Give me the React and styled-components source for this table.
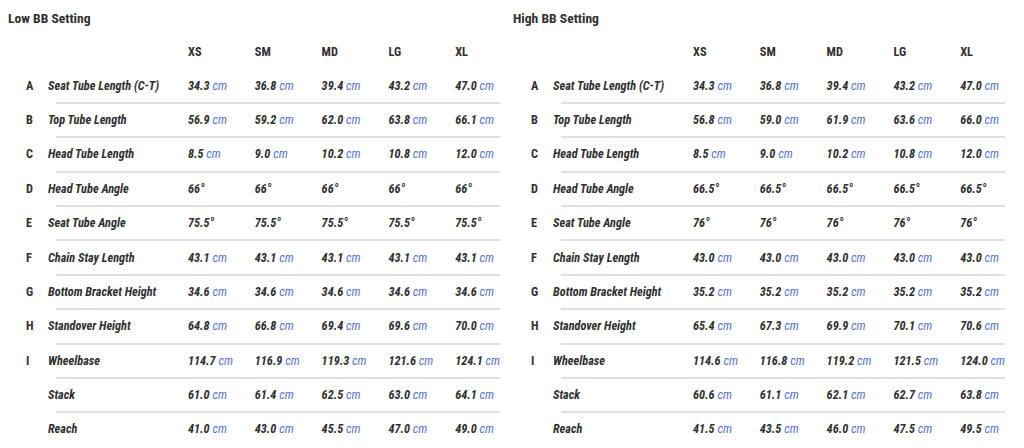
import React from 'react';
import styled, { createGlobalStyle } from 'styled-components';

const GlobalStyle = createGlobalStyle`
    body {
        margin: 0;
        background: #fff;
        font-family: "Roboto Condensed", "Liberation Sans Narrow", "DejaVu Sans Condensed", Roboto, sans-serif;
        color: #303030;
    }
`;

const Page = styled.div`
    display: flex;
    padding: 8px 0 0 8px;
    width: 1024px;
    height: 448px;
    box-sizing: border-box;
    overflow: hidden;
`;

const Panel = styled.div`
    width: 505px;
    display: flex;
    flex-direction: column;
`;

const Title = styled.div`
    font-size: 13.6px;
    font-weight: 700;
    line-height: 20px;
    margin-bottom: 7px;
`;

const Row = styled.div`
    display: grid;
    grid-template-columns: 22px 140px repeat(4, 66.8px) 1fr;
    align-items: center;
    height: ${props => props.header ? '34.4px' : '32.4px'};
    padding-left: 18px;
    font-size: 12.3px;
`;

const Size = styled.div`
    font-weight: 700;
`;

const Letter = styled.div`
    font-weight: 700;
`;

const Label = styled.div`
    font-weight: 700;
    font-style: italic;
    white-space: nowrap;
`;

const Value = styled.div`
    font-style: italic;
    white-space: nowrap;
`;

const Num = styled.span`
    font-weight: 700;
`;

const Unit = styled.span`
    color: #5273d8;
    font-weight: 400;
`;

const Divider = styled.div`
    height: 2px;
    margin: 0 13px 0 48px;
    background: #e0e0e0;
`;

const sizes = ['XS', 'SM', 'MD', 'LG', 'XL'];

const low = [
    ['A', 'Seat Tube Length (C-T)', ['34.3', '36.8', '39.4', '43.2', '47.0']],
    ['B', 'Top Tube Length', ['56.9', '59.2', '62.0', '63.8', '66.1']],
    ['C', 'Head Tube Length', ['8.5', '9.0', '10.2', '10.8', '12.0']],
    ['D', 'Head Tube Angle', ['66°', '66°', '66°', '66°', '66°']],
    ['E', 'Seat Tube Angle', ['75.5°', '75.5°', '75.5°', '75.5°', '75.5°']],
    ['F', 'Chain Stay Length', ['43.1', '43.1', '43.1', '43.1', '43.1']],
    ['G', 'Bottom Bracket Height', ['34.6', '34.6', '34.6', '34.6', '34.6']],
    ['H', 'Standover Height', ['64.8', '66.8', '69.4', '69.6', '70.0']],
    ['I', 'Wheelbase', ['114.7', '116.9', '119.3', '121.6', '124.1']],
    ['', 'Stack', ['61.0', '61.4', '62.5', '63.0', '64.1']],
    ['', 'Reach', ['41.0', '43.0', '45.5', '47.0', '49.0']],
];

const high = [
    ['A', 'Seat Tube Length (C-T)', ['34.3', '36.8', '39.4', '43.2', '47.0']],
    ['B', 'Top Tube Length', ['56.8', '59.0', '61.9', '63.6', '66.0']],
    ['C', 'Head Tube Length', ['8.5', '9.0', '10.2', '10.8', '12.0']],
    ['D', 'Head Tube Angle', ['66.5°', '66.5°', '66.5°', '66.5°', '66.5°']],
    ['E', 'Seat Tube Angle', ['76°', '76°', '76°', '76°', '76°']],
    ['F', 'Chain Stay Length', ['43.0', '43.0', '43.0', '43.0', '43.0']],
    ['G', 'Bottom Bracket Height', ['35.2', '35.2', '35.2', '35.2', '35.2']],
    ['H', 'Standover Height', ['65.4', '67.3', '69.9', '70.1', '70.6']],
    ['I', 'Wheelbase', ['114.6', '116.8', '119.2', '121.5', '124.0']],
    ['', 'Stack', ['60.6', '61.1', '62.1', '62.7', '63.8']],
    ['', 'Reach', ['41.5', '43.5', '46.0', '47.5', '49.5']],
];

function Cell({ v }) {
    // angles have no unit
    if (v.endsWith('°')) return <Value><Num>{v}</Num></Value>;
    return <Value><Num>{v}</Num> <Unit>cm</Unit></Value>;
}

function GeoTable({ title, rows }) {
    return (
        <Panel>
            <Title>{title}</Title>
            <Row header>
                <span />
                <span />
                {sizes.map(s => <Size key={s}>{s}</Size>)}
            </Row>
            {rows.map(([letter, label, vals], i) => (
                <React.Fragment key={label}>
                    {i > 0 && <Divider />}
                    <Row>
                        <Letter>{letter}</Letter>
                        <Label>{label}</Label>
                        {vals.map((v, j) => <Cell key={j} v={v} />)}
                    </Row>
                </React.Fragment>
            ))}
        </Panel>
    );
}

export default function App() {
    return (
        <>
            <GlobalStyle />
            <Page>
                <GeoTable title="Low BB Setting" rows={low} />
                <GeoTable title="High BB Setting" rows={high} />
            </Page>
        </>
    );
}
